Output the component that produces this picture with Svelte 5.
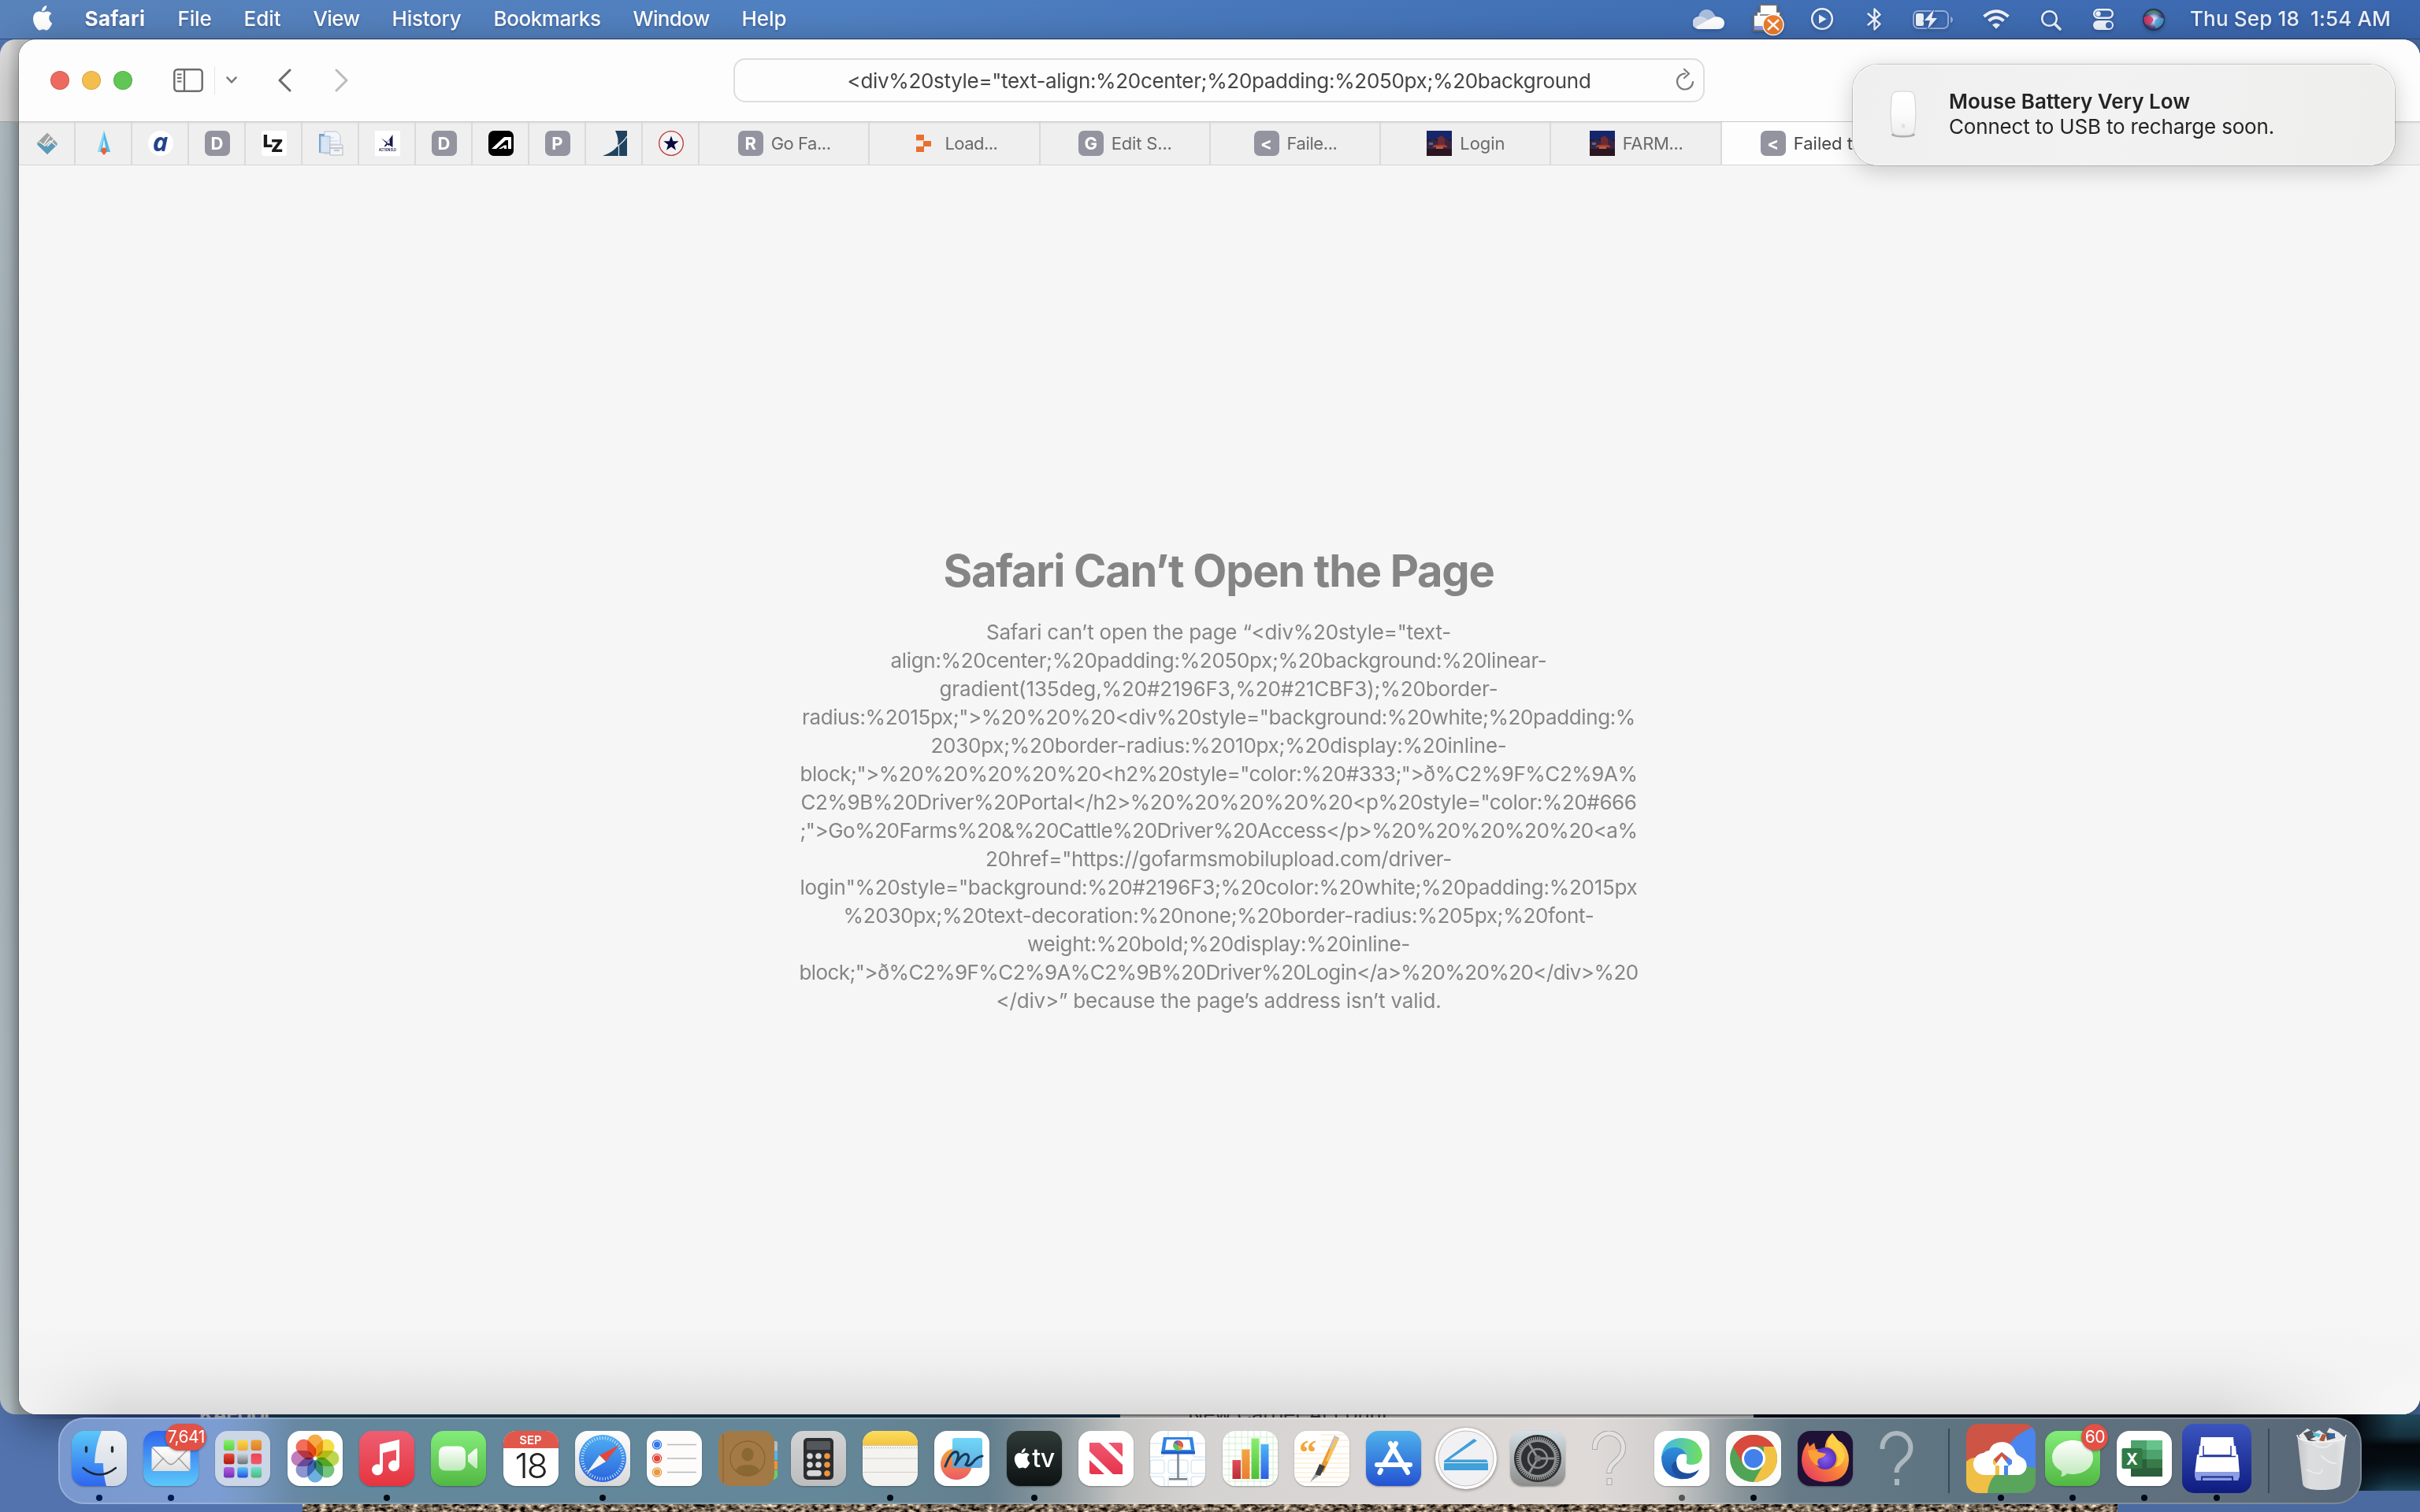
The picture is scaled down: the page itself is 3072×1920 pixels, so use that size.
<script>
  const menus = [
    ['File', 43], ['Edit', 47], ['View', 59], ['History', 88],
    ['Bookmarks', 136], ['Window', 97], ['Help', 57]
  ];

  const tabs = [
    { kind: 'R', title: 'Go Fa...', w: 76 },
    { kind: 'pixel', title: 'Load...', w: 67 },
    { kind: 'G', title: 'Edit S...', w: 77 },
    { kind: '<', title: 'Faile...', w: 64 },
    { kind: 'photo', title: 'Login', w: 57 },
    { kind: 'photo', title: 'FARM...', w: 77 }
  ];

  const lines = [
    ['Safari can’t open the page “<div%20style="text-', 590],
    ['align:%20center;%20padding:%2050px;%20background:%20linear-', 833],
    ['gradient(135deg,%20#2196F3,%20#21CBF3);%20border-', 709],
    ['radius:%2015px;">%20%20%20<div%20style="background:%20white;%20padding:%', 1058],
    ['2030px;%20border-radius:%2010px;%20display:%20inline-', 731],
    ['block;">%20%20%20%20%20<h2%20style="color:%20#333;">ð%C2%9F%C2%9A%', 1063],
    ['C2%9B%20Driver%20Portal</h2>%20%20%20%20%20<p%20style="color:%20#666', 1061],
    [';">Go%20Farms%20&%20Cattle%20Driver%20Access</p>%20%20%20%20%20<a%', 1063],
    ['20href="https://gofarmsmobilupload.com/driver-', 592],
    ['login"%20style="background:%20#2196F3;%20color:%20white;%20padding:%2015px', 1063],
    ['%2030px;%20text-decoration:%20none;%20border-radius:%205px;%20font-', 953],
    ['weight:%20bold;%20display:%20inline-', 486],
    ['block;">ð%C2%9F%C2%9A%C2%9B%20Driver%20Login</a>%20%20%20</div>%20', 1065],
    ['</div>” because the page’s address isn’t valid.', 565]
  ];

  const petals = ['#f6a02c', '#f4d92b', '#b3d235', '#62bd6a', '#5aa5dc', '#7c86c9', '#b96bb0', '#ee5a45'];
  const pads = [
    ['#8af06a', '#5fd044'], ['#f8d94c', '#f2a733'], ['#f0a33a', '#de7a2c'],
    ['#ef4a3c', '#a91a12'], ['#c9d4dc', '#6c7072'], ['#ee4257', '#ef5b6b'],
    ['#b55fe4', '#6f2fb4'], ['#55c8f8', '#2450e0'], ['#74e0cf', '#4bb77c']
  ];
  const ticks = Array.from({ length: 48 }, (_, i) => i * 7.5);
  const gearTeeth = Array.from({ length: 60 }, (_, i) => i * 6);

  /* Tracks the text so that the label fills the given width. */
  function fit(node, width) {
    const count = [...node.textContent].length;
    const natural = node.getBoundingClientRect().width;
    node.style.letterSpacing = (width - natural) / count + 'px';
  }
</script>

{#snippet favicon(kind)}
  {#if kind === 'photo'}
    <svg class="fav" viewBox="0 0 32 32">
      <rect width="32" height="32" fill="#1c1a38" />
      <rect width="32" height="11" fill="#16266a" />
      <path d="M0 14 8 11l8 3 8-4 8 4v9H0z" fill="#3a2440" />
      <path d="M14 9 19 6l4 4v9h-9z" fill="#6c2b36" />
      <path d="M10 18h14l3 3H7z" fill="#a83e30" />
      <path d="M3 15h5v3H3z" fill="#4c6c9c" />
      <path d="M12 20h9v3h-9z" fill="#c05a3c" />
      <rect y="24" width="32" height="8" fill="#2a1520" />
    </svg>
  {:else if kind === 'pixel'}
    <svg class="fav" viewBox="0 0 32 32">
      <g fill="#e96f2e"><rect x="6" y="5" width="10" height="7" /><rect x="15" y="13" width="10" height="7" /><rect x="6" y="20" width="10" height="7" /></g>
      <path d="M6 12h9v1H6z" fill="#f5c3a5" />
    </svg>
  {:else}
    <span class="fav letter">{kind}</span>
  {/if}
{/snippet}

<div class="desktop">
  <header class="menubar">
    <svg class="apple" viewBox="0 0 26 32" width="26" height="32"><path fill="#fff" d="M18.2 0c.2 2-.6 3.800-1.700 5.200-1.200 1.400-2.800 2.300-4.400 2.200-.2-1.900.7-3.800 1.700-5C15 1.100 16.800.1 18.200 0zM25.200 22.700c-.8 1.800-1.200 2.600-2.200 4.200-1.400 2.200-3.200 4.500-5 4.500-1.700 0-2.100-1.100-4.400-1.100s-2.800 1.100-4.400 1.100c-1.900 0-3.400-2.100-4.800-4.300C.5 21.200.200 14.300 2.700 10.800c1.700-2.500 4.200-3.400 6-3.400 2.100 0 3.400 1.200 5.200 1.200 1.700 0 2.700-1.200 5.200-1.200 1.700 0 3.900.8 5.300 2.900-4.700 2.600-3.900 9.300.8 12.400z" /></svg>
    <nav>
      <strong use:fit={77}>Safari</strong>
      {#each menus as [name, w]}<span use:fit={w}>{name}</span>{/each}
    </nav>
    <div class="status">
      <svg viewBox="2150 0 40 48" width="40" height="48">
        <path d="M2157 22a10.500 10.500 0 0 1 20-5l4 6-16 8z" fill="#a9bedd" />
        <path d="M2158 36a8 8 0 0 1-1-16c5-1 9 2 13 5l6 6-8 5z" fill="#d3dcec" />
        <path d="M2154 33 2174 22c6-4 16-1 16 6 0 5-3 8-8 8h-24q-3 0-4-3z" fill="#fff" />
      </svg>
      <svg class="m36" viewBox="2226 0 40 48" width="40" height="48">
        <path d="M2227 38V18h4v-4h4V5h22v9h4v5h2v19z" fill="#fff" stroke="#6d6f76" stroke-width="2" />
        <path d="M2235 18h22" stroke="#6d6f76" stroke-width="1.500" /><path d="M2228 32h14v5h-14z" fill="#8d9be0" />
        <circle cx="2252" cy="30.500" r="13" fill="#ef7d2d" stroke="#fff" stroke-width="1.500" />
        <path d="m2245 24 14 13m0-13-14 13" stroke="#fff" stroke-width="2.500" />
      </svg>
      <svg class="m34" viewBox="2300 0 28 48" width="28" height="48"><circle cx="2314" cy="23" r="12.800" fill="none" stroke="#eef2f9" stroke-width="2.500" /><path d="M2310 17.500v11.500l9.500-5.700z" fill="#eef2f9" /></svg>
      <svg class="m43" viewBox="2370 0 18 48" width="18" height="48"><path d="m2371.500 16.500 15 13-7 7v-26l7 7-15 13" fill="none" stroke="#eef2f9" stroke-width="2.400" stroke-linejoin="round" stroke-linecap="round" /></svg>
      <svg class="m39" viewBox="2427 0 53 48" width="53" height="48">
        <rect x="2429" y="13" width="44" height="22" rx="6" fill="none" stroke="#94aed7" stroke-width="2" /><path d="M2476 20v8q3-1 3-4t-3-4z" fill="#94aed7" />
        <rect x="2432" y="16" width="10" height="16" rx="2.500" fill="#eef2f9" />
        <path d="M2455 11 2443 25h7l-3 11 12-14h-7z" fill="#eef2f9" stroke="#3e6aaf" stroke-width="2.500" paint-order="stroke" />
      </svg>
      <svg class="m37" viewBox="2517 0 34 48" width="34" height="48"><g fill="none" stroke="#eef2f9" stroke-width="4"><path d="M2518.500 20q15.500-13.500 31 0" /><path d="M2524.500 25.500q9.500-8.500 19 0" /></g><path d="M2529 30.500q5-4 10 0l-5 5.300z" fill="#eef2f9" /></svg>
      <svg class="m40" viewBox="2591 0 26 48" width="26" height="48"><circle cx="2601.500" cy="22.500" r="9.300" fill="none" stroke="#eef2f9" stroke-width="2.500" /><path d="m2608.500 29.500 6.500 6.500" stroke="#eef2f9" stroke-width="3.500" stroke-linecap="round" /></svg>
      <svg class="m40" viewBox="2657 0 26 48" width="26" height="48"><rect x="2658.200" y="11.200" width="23.600" height="10.600" rx="5.300" fill="none" stroke="#eef2f9" stroke-width="2.400" /><circle cx="2663.500" cy="16.500" r="3.200" fill="#eef2f9" /><rect x="2657" y="25" width="26" height="12" rx="6" fill="#eef2f9" /><circle cx="2677" cy="31" r="4" fill="#3c68ae" /></svg>
      <svg class="m37" viewBox="2720 0 28 48" width="28" height="48">
        <defs><radialGradient id="siri"><stop offset="0" stop-color="#fff" /><stop offset=".35" stop-color="#a9b9e8" /><stop offset=".7" stop-color="#4d4a86" /><stop offset="1" stop-color="#26304c" /></radialGradient></defs>
        <circle cx="2734" cy="24" r="14" fill="url(#siri)" /><path d="M2723 18q10-12 21 0-11-4-21 0z" fill="#3da06b" opacity=".75" /><path d="M2721.500 21q8-5 12.500 3-5 10-11 5-2-4-1.500-8z" fill="#d8365f" opacity=".85" /><path d="M2735 25q8-6 12-2-1 10-11 12z" fill="#47a9d8" opacity=".8" />
      </svg>
      <span class="clock" use:fit={255}>Thu Sep 18&nbsp; 1:54 AM</span>
    </div>
  </header>

  <main class="stage">
    <div class="backwin"><div class="backtop"></div></div>
    <section class="window">
      <div class="toolbar">
        <div class="lights"><i class="red"></i><i class="amber"></i><i class="green"></i></div>
        <svg class="side" viewBox="0 0 38 30" width="38" height="30"><rect x="1.300" y="1.300" width="35.400" height="27.400" rx="4" fill="none" stroke="#6e6e6e" stroke-width="2.500" /><path d="M14 1v28" stroke="#6e6e6e" stroke-width="2.300" /><path d="M5 7.500h5.500m-5.500 4.500h5.500m-5.500 4.500h5.500" stroke="#6e6e6e" stroke-width="1.800" /></svg>
        <i class="rule"></i>
        <svg class="chev" viewBox="0 0 14 10" width="14" height="10"><path d="m1.500 1.500 5.500 6 5.500-6" fill="none" stroke="#757577" stroke-width="2.500" stroke-linecap="round" stroke-linejoin="round" /></svg>
        <svg class="back" viewBox="0 0 17 30" width="17" height="30"><path d="M15 2 2 15l13 13" fill="none" stroke="#6b6b6b" stroke-width="3" stroke-linecap="round" stroke-linejoin="round" /></svg>
        <svg class="fwd" viewBox="0 0 17 30" width="17" height="30"><path d="m2 2 13 13L2 28" fill="none" stroke="#bcbcbc" stroke-width="3" stroke-linecap="round" stroke-linejoin="round" /></svg>
        <div class="address">
          <span use:fit={944}>&lt;div%20style="text-align:%20center;%20padding:%2050px;%20background</span>
          <svg viewBox="0 0 24 30" width="24" height="30"><path d="M12 7.500A10 10 0 1 0 22 18" fill="none" stroke="#7a7a7a" stroke-width="2.200" stroke-linecap="round" /><path d="m11 2 6 5.500-6 5.500" fill="none" stroke="#7a7a7a" stroke-width="2.200" stroke-linecap="round" stroke-linejoin="round" /></svg>
        </div>
      </div>

      <div class="tabbar">
        <div class="pin"><svg class="fav" viewBox="0 0 32 32"><path d="M16 2.500 29 16 16 30 2.500 16z" fill="#a1a3a2" /><path d="m3 17.500 6-3 7 5 7-5 6 3L16 30z" fill="#5b9ab8" /><path d="m16 20 8-9m-13 7 8-11M6 14l7 5 7-6 7 6" stroke="#efefef" stroke-width="1.500" fill="none" /></svg></div>
        <div class="pin"><svg class="fav" viewBox="0 0 32 32"><path d="M16 0 24 27h-5L16 10l-3 17H8z" fill="#4fb8e8" /><path d="M16 0 8 27h3L16 7z" fill="#8bdcf5" /><path d="M12.500 25a3.500 3.500 0 0 1 7 0q0 3-3.500 6-3.500-3-3.500-6z" fill="#e5633a" /></svg></div>
        <div class="pin"><span class="fav scripta">a</span></div>
        <div class="pin">{@render favicon('D')}</div>
        <div class="pin"><span class="fav lz"><b>L</b><b>Z</b></span></div>
        <div class="pin"><svg class="fav" viewBox="0 0 32 32"><path d="M1 4h11v24H1z" fill="#6fa4d2" /><path d="M8 1h15l5 5v23H8z" fill="#f2f5fa" stroke="#b9c3d3" /><path d="M3 7h12v21H3z" fill="#d7e5f4" stroke="#9db6d0" /><path d="M11 13h14M11 17h14M11 9h9" stroke="#cbd3df" /><path d="M15 18h16v13H15z" fill="#f4f4f6" stroke="#b4bac6" /><path d="M15 22h16M20 25h7" stroke="#c0c5cf" stroke-width="2" /></svg></div>
        <div class="pin"><svg class="fav" viewBox="0 0 32 32"><rect width="32" height="32" fill="#fff" /><path d="M22.500 5v16l-4-2.500V15l-5 5h-2zM8 9.500l11 7.500-1.500 2z" fill="#17194d" /><path d="m18.500 11-3.500 5h3.500z" fill="#fff" /><text x="16" y="26" text-anchor="middle" textLength="22" lengthAdjust="spacingAndGlyphs" font-size="4.500" font-weight="700" fill="#17194d">ACTION ELD</text></svg></div>
        <div class="pin">{@render favicon('D')}</div>
        <div class="pin"><svg class="fav" viewBox="0 0 32 32"><rect width="32" height="32" rx="7" fill="#000" /><path d="M4 23 20 8h9v15h-4V12h-3L10 23z" fill="#fff" /><path d="m13 23 7-4.500h3V23h-3v-2l-4 2z" fill="#fff" /></svg></div>
        <div class="pin">{@render favicon('P')}</div>
        <div class="pin"><svg class="fav" viewBox="0 0 32 32"><path d="M17 0h15v32H1Q15 27 20 19q2-9-3-19z" fill="#21425f" /><path d="M13 23Q26 17 32 7M21.500 18v14" fill="none" stroke="#e6ebf0" stroke-width="1.200" /></svg></div>
        <div class="pin"><svg class="fav" viewBox="0 0 32 32"><circle cx="16" cy="16" r="15.300" fill="#f3f3f5" stroke="#c4342c" stroke-width="1.300" /><path d="m16 6.500 2.400 6.800h7.300l-5.800 4.400 2.100 7-6-4.200-6 4.200 2.100-7-5.800-4.400h7.300z" fill="#070a3a" /></svg></div>
        {#each tabs as t}
          <div class="tab">{@render favicon(t.kind)}<span use:fit={t.w}>{t.title}</span></div>
        {/each}
        <div class="tab active">{@render favicon('<')}<span>Failed t...</span></div>
        <div class="rest"></div>
      </div>

      <article class="page">
        <h1 use:fit={699}>Safari Can’t Open the Page</h1>
        {#each lines as [text, w]}<p><span use:fit={w}>{text}</span></p>{/each}
      </article>
    </section>

    <div class="behind">
      <div class="strip">
        <span class="kae">KAEUUI</span>
        <div class="card"><span>New Carrier Account</span></div>
        <div class="night"></div>
      </div>
    </div>
    <div class="nightside"></div>
    <svg class="gravel" width="2304" height="10">
      <filter id="rock" x="0" y="0" width="100%" height="100%" color-interpolation-filters="sRGB"><feTurbulence type="fractalNoise" baseFrequency=".13 .22" numOctaves="3" seed="4" /><feColorMatrix values="1.700 0 0 0 -.38  1.600 0 0 0 -.39  1.450 0 0 0 -.38  0 0 0 0 1" /></filter>
      <rect width="2304" height="10" filter="url(#rock)" />
    </svg>
  </main>

  <aside class="notice">
    <svg viewBox="0 0 36 62" width="36" height="62"><defs><linearGradient id="mouse" x1="0" y1="0" x2="0" y2="1"><stop offset="0" stop-color="#fff" /><stop offset=".5" stop-color="#fcfcfc" /><stop offset="1" stop-color="#eee" /></linearGradient></defs><ellipse cx="18" cy="57" rx="15" ry="3.500" fill="#aaa" /><path d="M3 12Q3 2 12 2h12q9 0 9 10 2 16 0 36 0 10-10 10H13Q3 58 3 48 1 28 3 12z" fill="url(#mouse)" stroke="#cfd0d0" stroke-width="1" /><ellipse cx="18" cy="46" rx="2.300" ry="3" fill="#e0e1e1" /></svg>
    <div><strong use:fit={306}>Mouse Battery Very Low</strong><span use:fit={413}>Connect to USB to recharge soon.</span></div>
  </aside>

  <footer class="dock">
    <div class="cell"><div class="slot">
      <svg class="app" viewBox="0 0 70 70"><defs><linearGradient id="fb" x2="0" y2="1"><stop stop-color="#5ac8f8" /><stop offset="1" stop-color="#2f66ee" /></linearGradient><linearGradient id="fw" x2="0" y2="1"><stop stop-color="#f1f2f4" /><stop offset="1" stop-color="#d0d8e3" /></linearGradient></defs><rect width="70" height="70" fill="url(#fb)" /><path d="M38 0q-8 18-9 41h11q0 15 4 29h26V0z" fill="url(#fw)" /><path d="M18.500 21v5M51.500 21v5" stroke="#222b33" stroke-width="3.400" stroke-linecap="round" /><path d="M14.500 47q20.500 17 41.500 0" fill="none" stroke="#1c2530" stroke-width="2.400" stroke-linecap="round" /></svg></div><i class="dot navy"></i></div>
    <div class="cell"><div class="slot">
      <svg class="app" viewBox="0 0 70 70"><defs><linearGradient id="ml" x2="0" y2="1"><stop stop-color="#3067ee" /><stop offset="1" stop-color="#5bc8fa" /></linearGradient><linearGradient id="env" x2="0" y2="1"><stop stop-color="#fff" /><stop offset="1" stop-color="#e0e0e0" /></linearGradient></defs><rect width="70" height="70" fill="url(#ml)" /><rect x="10.500" y="20" width="49" height="31" rx="3" fill="url(#env)" /><path d="m11 50 15-16m33 16L44 34M11 21l19 19q5 5 10 0l19-19" fill="none" stroke="#9c9c9c" stroke-width="1.300" /></svg></div><i class="dot navy"></i><b class="badge wide">7,641</b></div>
    <div class="cell"><div class="slot">
      <svg class="app" viewBox="0 0 70 70"><rect width="70" height="70" fill="#cbd6e6" />{#each pads as [a, b], i}<linearGradient id="pad{i}" x2="0" y2="1"><stop stop-color={a} /><stop offset="1" stop-color={b} /></linearGradient><rect x={11 + (i % 3) * 17.3} y={11.500 + Math.floor(i / 3) * 17.300} width="13.500" height="13.500" rx="3" fill="url(#pad{i})" />{/each}</svg></div></div>
    <div class="cell"><div class="slot">
      <svg class="app" viewBox="0 0 70 70"><rect width="70" height="70" fill="#fff" /><g class="petals">{#each petals as c, i}<rect x="25" y="4.500" width="20" height="28.500" rx="10" fill={c} opacity=".88" transform="rotate({i * 45} 35 35)" />{/each}</g></svg></div></div>
    <div class="cell"><div class="slot">
      <svg class="app" viewBox="0 0 70 70"><defs><linearGradient id="mu" x2="0" y2="1"><stop stop-color="#ee5f72" /><stop offset="1" stop-color="#e6343f" /></linearGradient></defs><rect width="70" height="70" fill="url(#mu)" /><path d="m26 17 25-6v34a7 7 0 1 1-4-7V24l-17 4v22a7 7 0 1 1-4-7z" fill="#fff" /></svg></div><i class="dot"></i></div>
    <div class="cell"><div class="slot">
      <svg class="app" viewBox="0 0 70 70"><defs><linearGradient id="ft" x2="0" y2="1"><stop stop-color="#84ec79" /><stop offset="1" stop-color="#51b943" /></linearGradient><linearGradient id="cam" x2="0" y2="1"><stop stop-color="#fff" /><stop offset="1" stop-color="#bfe8b9" /></linearGradient></defs><rect width="70" height="70" fill="url(#ft)" /><rect x="10" y="19.500" width="34" height="31" rx="8" fill="url(#cam)" /><path d="m47 31 9-8q3-2 3 1v22q0 3-3 1l-9-8z" fill="url(#cam)" /></svg></div></div>
    <div class="cell"><div class="slot"><div class="app calendar"><b>SEP</b><span>18</span></div></div></div>
    <div class="cell"><div class="slot">
      <svg class="app" viewBox="0 0 70 70"><defs><linearGradient id="sw" x2="0" y2="1"><stop stop-color="#fff" /><stop offset="1" stop-color="#d8d8d8" /></linearGradient><linearGradient id="sf" x2="0" y2="1"><stop stop-color="#4fb0f2" /><stop offset="1" stop-color="#2a63dd" /></linearGradient></defs><rect width="70" height="70" fill="url(#sw)" /><circle cx="35" cy="35" r="30" fill="url(#sf)" />{#each ticks as a}<path d="M35 7v4" stroke="#d6e8fb" stroke-width="1" transform="rotate({a} 35 35)" />{/each}<path d="m56 18-25 13 8 8z" fill="#e5463c" /><path d="m15 53 16-22 8 8z" fill="#f4f4f4" /></svg></div><i class="dot"></i></div>
    <div class="cell"><div class="slot">
      <svg class="app" viewBox="0 0 70 70"><rect width="70" height="70" fill="#fdfcfb" />{#each ['#2f79ec', '#e2473b', '#ea973c'] as c, i}<circle cx="13" cy={17.500 + i * 17.500} r="5.600" fill="none" stroke={c} stroke-width="1.200" /><circle cx="13" cy={17.500 + i * 17.500} r="4" fill={c} /><path d="M26 {17.500 + i * 17.500}h37" stroke="#b9b9be" stroke-width="1.300" />{/each}</svg></div></div>
    <div class="cell"><div class="slot">
      <svg class="contacts" viewBox="0 0 75 70" width="75" height="70"><path d="M66 13h7q2 0 2 3v10h-9z" fill="#b7bcb9" /><path d="M66 25h8q1 0 1 2v10h-9z" fill="#5ab3e8" /><path d="M66 38h8q1 0 1 2v9h-9z" fill="#ee9433" /><path d="M66 50h9v7q0 4-9 6z" fill="#6ccf63" /><rect x="0" width="71" height="70" rx="15" fill="#a37a45" /><path d="M6 4v62" stroke="#8b6536" stroke-width="1.300" /><circle cx="37" cy="35" r="22" fill="none" stroke="#87642f" stroke-width="1.300" /><ellipse cx="37" cy="30" rx="7.500" ry="8.500" fill="#87642f" opacity=".85" /><path d="M22 50q3-7 15-7t15 7q-6 7-15 7t-15-7z" fill="#87642f" opacity=".85" /></svg></div></div>
    <div class="cell"><div class="slot">
      <svg class="app" viewBox="0 0 70 70"><defs><linearGradient id="cc" x2="0" y2="1"><stop stop-color="#d3d3d3" /><stop offset="1" stop-color="#bdbdbd" /></linearGradient></defs><rect width="70" height="70" fill="url(#cc)" /><rect x="16" y="9" width="38" height="53" rx="5" fill="#2b2d30" /><rect x="20" y="13" width="30" height="11" rx="1.500" fill="#55585b" /><g fill="#d6d7d6"><circle cx="24" cy="32" r="3.800" /><circle cx="35" cy="32" r="3.800" /><circle cx="24" cy="43" r="3.800" /><circle cx="35" cy="43" r="3.800" /><rect x="20.200" y="50" width="18.600" height="7.600" rx="3.800" /></g><g fill="#f0953a"><circle cx="46" cy="32" r="3.800" /><circle cx="46" cy="43" r="3.800" /><circle cx="46" cy="54" r="3.800" /></g></svg></div></div>
    <div class="cell"><div class="slot">
      <svg class="app" viewBox="0 0 70 70"><defs><linearGradient id="ny" x2="0" y2="1"><stop stop-color="#fbdc62" /><stop offset="1" stop-color="#f4c53b" /></linearGradient></defs><rect width="70" height="70" fill="#f4f3f0" /><rect width="70" height="18" fill="url(#ny)" /><path d="M2 21.500h68" stroke="#b6b4b0" stroke-width="1.500" stroke-dasharray="1 2" /><path d="M0 18.500h70" stroke="#cfc9b5" /><path d="M0 35h70M0 52.500h70" stroke="#d3d1ce" stroke-width="1.200" /></svg></div><i class="dot"></i></div>
    <div class="cell"><div class="slot">
      <svg class="app" viewBox="0 0 70 70"><defs><linearGradient id="fo" x2="0" y2="1"><stop stop-color="#f4a73a" /><stop offset="1" stop-color="#ec5a66" /></linearGradient><linearGradient id="fc" x2="0" y2="1"><stop stop-color="#64d5f8" /><stop offset="1" stop-color="#58a5de" /></linearGradient></defs><rect width="70" height="70" fill="#fff" /><circle cx="28" cy="42" r="20" fill="url(#fo)" /><rect x="23" y="9" width="38" height="38" rx="3" fill="url(#fc)" opacity=".93" /><path d="M14 45Q22 24 29 27q4 3-3 17 10-17 16-14 4 3-2 13 4 3 9-3 5-7 12-8" fill="none" stroke="#123a5c" stroke-width="3" stroke-linecap="round" /></svg></div></div>
    <div class="cell"><div class="slot">
      <div class="app tv"><svg viewBox="0 0 26 32" width="21" height="26"><path fill="#fff" d="M18.200 0c.2 2-.6 3.800-1.700 5.200-1.200 1.400-2.800 2.300-4.400 2.200-.2-1.900.7-3.800 1.700-5C15 1.100 16.800.1 18.200 0zM25.200 22.700c-.8 1.800-1.200 2.600-2.200 4.200-1.400 2.200-3.200 4.500-5 4.500-1.700 0-2.100-1.100-4.400-1.100s-2.800 1.100-4.400 1.100c-1.900 0-3.400-2.100-4.800-4.300C.5 21.200.200 14.300 2.700 10.800c1.700-2.500 4.200-3.400 6-3.400 2.100 0 3.400 1.200 5.200 1.200 1.700 0 2.700-1.200 5.200-1.200 1.700 0 3.900.8 5.300 2.900-4.700 2.600-3.900 9.300.8 12.400z" /></svg><span>tv</span></div></div><i class="dot"></i></div>
    <div class="cell"><div class="slot">
      <svg class="app" viewBox="0 0 70 70"><defs><linearGradient id="nw" x2="0" y2="1"><stop stop-color="#ef5871" /><stop offset="1" stop-color="#e7344c" /></linearGradient></defs><rect width="70" height="70" fill="#fff" /><path d="M14 15h13l29 28v12H44L14 26z" fill="url(#nw)" /><path d="M38 15h15q3 0 3 3v15zM14 37l19 18H17q-3 0-3-3z" fill="url(#nw)" /></svg></div></div>
    <div class="cell"><div class="slot">
      <svg class="app" viewBox="0 0 70 70"><rect width="70" height="70" fill="#fff" /><g fill="none" stroke="#c8def3" stroke-width="1"><rect x="-6" y="16" width="24" height="17" rx="3" /><rect x="0" y="37" width="18" height="17" rx="3" /><rect x="23" y="37" width="25" height="17" rx="3" /><rect x="52" y="37" width="25" height="17" rx="3" /><rect x="54" y="16" width="25" height="17" rx="3" /><rect x="-6" y="58" width="24" height="17" rx="3" /><rect x="23" y="58" width="25" height="17" rx="3" /><rect x="52" y="58" width="25" height="17" rx="3" /><path d="M23 0v8m25-8v8" /></g><path d="M34 28h3v33h-3z" fill="#8a96a3" /><path d="M24 60h23v2.500H24z" fill="#777f87" /><path d="M17 8h37l3 20H14z" fill="#2f84e2" /><path d="M14 26h43v3.500H14z" fill="#1e5ec4" /><path d="M21 11h29l2 13H19z" fill="#fff" /><circle cx="35.500" cy="18.500" r="6.500" fill="#5cc45a" /><path d="M35.500 18.500V12a6.500 6.500 0 0 1 6 9z" fill="#e15a52" /><path d="M35.500 18.500 30 15a6.500 6.500 0 0 1 5.500-3z" fill="#7b58c8" /><path d="m35.500 18.500 6 2.500a6.500 6.500 0 0 1-4 4z" fill="#f0a43a" /></svg></div></div>
    <div class="cell"><div class="slot">
      <svg class="app" viewBox="0 0 70 70"><rect width="70" height="70" fill="#fff" /><path d="M0 8h70M0 16h70M0 24h70M0 32h70M0 40h70M0 48h70M0 56h70M0 64h70M8 0v70M16 0v70M24 0v70M32 0v70M40 0v70M48 0v70M56 0v70M64 0v70" stroke="#d4efd0" stroke-width="1" /><defs><linearGradient id="b1" x2="0" y2="1"><stop stop-color="#e0505a" /><stop offset="1" stop-color="#bb2a38" /></linearGradient><linearGradient id="b2" x2="0" y2="1"><stop stop-color="#f3a544" /><stop offset="1" stop-color="#ea7c30" /></linearGradient><linearGradient id="b3" x2="0" y2="1"><stop stop-color="#8aee6f" /><stop offset="1" stop-color="#4fbf37" /></linearGradient><linearGradient id="b4" x2="0" y2="1"><stop stop-color="#4fb5f8" /><stop offset="1" stop-color="#2d5ee2" /></linearGradient></defs><rect x="12.500" y="37" width="10.500" height="24" fill="url(#b1)" /><rect x="24.500" y="23.500" width="10" height="37.500" fill="url(#b2)" /><rect x="36.500" y="9.500" width="10" height="51.500" fill="url(#b3)" /><rect x="48.500" y="17" width="10" height="44" fill="url(#b4)" /></svg></div></div>
    <div class="cell"><div class="slot">
      <svg class="app" viewBox="0 0 70 70"><rect width="70" height="70" fill="#fff" /><path d="M34 5h36M34 12h36M0 29h70M0 35h70M0 41h70M0 47h70M0 53h70M0 59h70M0 65h70M34 20h36" stroke="#fbe3c2" stroke-width="1.200" /><text x="6" y="42" font-size="45" font-weight="700" fill="#f1a53a" class="quote">“</text><path d="m51 6 6 3-20 44-6-3z" fill="#eb9a2e" /><path d="m51 6 6 3-7 16-6-3z" fill="#b9c3d0" /><path d="m52 9 4 2-13 28-3-1z" fill="#f6c25c" /><path d="m32 42 7 3-6 12-7-1z" fill="#3d4145" /><path d="m26 55 5 2-11 8z" fill="#9aa2ac" /></svg></div></div>
    <div class="cell"><div class="slot">
      <svg class="app" viewBox="0 0 70 70"><defs><linearGradient id="as" x2="0" y2="1"><stop stop-color="#4fb2ec" /><stop offset="1" stop-color="#2552d2" /></linearGradient></defs><rect width="70" height="70" fill="url(#as)" /><g stroke="#fff" stroke-width="6" stroke-linecap="round"><path d="M14 43h42M38 16 24 40M31 16l22 37M19 50l-1.500 3" /></g></svg></div></div>
    <div class="cell"><div class="slot">
      <svg class="scan" viewBox="0 0 78 78" width="78" height="78"><circle cx="39" cy="39" r="39" fill="#fff" /><circle cx="39" cy="39" r="35" fill="#f1f1f3" stroke="#bdbdbd" stroke-width="1" /><path d="m11 42 38-28 4 2.500-35 24h47l2 3.500H11z" fill="#419fd9" /><path d="M11 45h56v9H11z" fill="#419fd9" /></svg></div></div>
    <div class="cell"><div class="slot">
      <svg class="app" viewBox="0 0 70 70"><defs><linearGradient id="st" x2="0" y2="1"><stop stop-color="#d3dfe6" /><stop offset="1" stop-color="#8d8d8b" /></linearGradient></defs><rect width="70" height="70" fill="url(#st)" /><circle cx="35" cy="35" r="30" fill="#2e3032" />{#each gearTeeth as a}<path d="M35 7.500v4" stroke="#9b9d9e" stroke-width="1.500" transform="rotate({a} 35 35)" />{/each}<g fill="none" stroke="#8d9092"><circle cx="35" cy="35" r="22.500" stroke-width="3" /><circle cx="35" cy="35" r="12" stroke-width="2.500" /><path d="M35 35h22M35 35 24 16M35 35 24 54" stroke-width="2.800" /></g><circle cx="35" cy="35" r="4" fill="#77797b" /></svg></div></div>
    <div class="cell"><div class="slot">
      <svg class="ask" viewBox="0 0 44 70" width="44" height="70"><path d="M3.500 24V21a18 18 0 0 1 36 0c0 17-18 18-18 33M22 60v9" fill="none" stroke="#999" stroke-opacity=".75" stroke-width="7" /><path d="M3.500 23V21a18 18 0 0 1 36 0c0 17-18 18-18 32M22 61v7" fill="none" stroke="#e4e2e1" stroke-width="5" /></svg></div></div>
    <div class="cell"><div class="slot">
      <svg class="app" viewBox="0 0 70 70"><defs><linearGradient id="eg"><stop stop-color="#3fb5f0" /><stop offset="1" stop-color="#72e05c" /></linearGradient><linearGradient id="eb" x2="0" y2="1"><stop stop-color="#2f8fdc" /><stop offset="1" stop-color="#1d58b4" /></linearGradient></defs><rect width="70" height="70" fill="#fff" /><path d="M9 32Q13 9 36 9q22 1 25 22-1 12-14 12-8 0-6-5 2-14-12-16-13-1-20 10z" fill="url(#eg)" /><path d="M9 33q5-13 19-12 9 1 13 9-12-3-13 8 0 17 20 20-7 4-16 3Q9 57 9 33z" fill="url(#eb)" /><path d="M28 38q-1 15 15 16 6 0 14-5-6 12-19 12-15-3-16-15 0-5 6-8z" fill="#1e4f9c" /></svg></div><i class="dot gray"></i></div>
    <div class="cell"><div class="slot">
      <svg class="app" viewBox="0 0 70 70"><rect width="70" height="70" fill="#fbfbfb" /><circle cx="35" cy="35" r="30" fill="#4fa555" /><path d="M9 20a30 30 0 0 1 52 0H35L22 43z" fill="#d84a3c" /><path d="M61 20a30 30 0 0 1-26 45l13-23V20z" fill="#f3c244" /><circle cx="35" cy="35" r="15" fill="#fff" /><circle cx="35" cy="35" r="12" fill="#4380ea" /></svg></div><i class="dot"></i></div>
    <div class="cell"><div class="slot">
      <svg class="app" viewBox="0 0 70 70"><defs><linearGradient id="fx" x1="1" y1="0" x2="0" y2="1"><stop stop-color="#fde24c" /><stop offset=".5" stop-color="#f98535" /><stop offset="1" stop-color="#e22a6b" /></linearGradient><radialGradient id="fp"><stop stop-color="#8a5cf5" /><stop offset="1" stop-color="#5532b8" /></radialGradient></defs><rect width="70" height="70" fill="#1f1236" /><path d="M44 3q4 8 12 12 9 9 9 22-1 27-30 28Q7 64 5 38q0-13 8-24l2 6 6-5 2 8 12 2q-2-13 9-22z" fill="url(#fx)" /><circle cx="35" cy="35" r="14" fill="url(#fp)" /><path d="M13 25q8-3 14 2l9 2q-2 5-9 6-4 5 1 10-12-3-15-20z" fill="#fca038" /><path d="M38 20q12 3 13 17-1 6-4 9 12-2 13-16-6-16-16-27-8 9-6 17z" fill="#fdd045" /></svg></div></div>
    <div class="cell"><div class="slot">
      <svg class="ask" viewBox="0 0 44 70" width="44" height="70"><path d="M3.500 23V21a18 18 0 0 1 36 0c0 17-18 18-18 32M22 61v8" fill="none" stroke="#adb7bf" stroke-width="6" /></svg></div></div>
    <div class="split first"></div>
    <div class="cell"><div class="slot">
      <svg class="app big" viewBox="0 0 88 88"><rect width="88" height="88" fill="#cc5546" /><path d="M88 0v60H55L50 35Q60 12 88 3z" fill="#4a86ee" /><path d="M0 48q6-6 16-5l32 12 7 13-24 20H0z" fill="#f0bf45" /><path d="M88 56v32H27q2-22 20-30 20-8 41-2z" fill="#59a55b" /><path d="M24 65a14 14 0 0 1-2-28q3-3 7-3 4-11 17-11 13 1 17 14 1 2 6 5a12 12 0 0 1-2 23z" fill="#fff" /><path d="M34 46 45 36l2 6-5 8v15h-5V54l-3-3z" fill="#f0bf45" /><path d="m45 36 13 10v5l-5 3v11h-5V50z" fill="#4a86ee" /><path d="m35 45 10-9 9 8-9 5-6 2z" fill="#cc5546" /><path d="m45 41 9 12h-6v12h-6V53h-6z" fill="#fff" /></svg></div><i class="dot"></i></div>
    <div class="cell"><div class="slot">
      <svg class="app" viewBox="0 0 70 70"><rect width="70" height="70" fill="url(#ft)" /><path d="M35 12c15 0 26 10 26 22S50 55 35 55q-4 0-7-1-3 4-8 4 2-3 1-7Q9 45 9 34c0-12 11-22 26-22z" fill="url(#cam)" /></svg></div><i class="dot"></i><b class="badge round">60</b></div>
    <div class="cell"><div class="slot">
      <svg class="app" viewBox="0 0 70 70"><rect width="70" height="70" fill="#fff" /><path d="M18 12h20v46H18z" fill="#4ea26d" /><path d="M38 12h20v12H38z" fill="#66c48a" /><path d="M38 24h20v12H38z" fill="#4ea26d" /><path d="M18 24h20v12H18z" fill="#3c8a58" /><path d="M38 36h20v11H38z" fill="#387b48" /><path d="M18 36h20v11H18zM18 47h40v11H18z" fill="#2c5f3c" /><rect x="6.500" y="22" width="26" height="26" rx="2" fill="#307a45" /><text x="19.500" y="42.500" font-size="20" font-weight="700" fill="#fff" text-anchor="middle">X</text></svg></div><i class="dot"></i></div>
    <div class="cell"><div class="slot">
      <svg class="app big" viewBox="0 0 88 88"><defs><linearGradient id="pr" x2="0" y2="1"><stop stop-color="#3b55bf" /><stop offset="1" stop-color="#0f1c80" /></linearGradient></defs><rect width="88" height="88" fill="url(#pr)" /><path d="M24 17h41l2 24H22z" fill="#fff" /><path d="M22 28h4v13h38V28h4l1 11 2 0 2 25H16l3-25 2 0z" fill="#fff" /><path d="M27 28v12h35V28M22 41.500h46" fill="none" stroke="#24389f" stroke-width="1.500" /><path d="M16 61h57v6l-2 5H18l-2-5z" fill="#8c9de2" /><path d="M25 72v-4.500h39V72" fill="none" stroke="#17288c" stroke-width="1.800" /></svg></div><i class="dot"></i></div>
    <div class="split second"></div>
    <div class="cell"><div class="slot">
      <svg viewBox="0 0 64 82" width="64" height="82"><defs><linearGradient id="tr"><stop stop-color="#c9c9c9" /><stop offset=".25" stop-color="#e2e2e2" /><stop offset=".8" stop-color="#dedede" /><stop offset="1" stop-color="#f1f1f1" /></linearGradient></defs><path d="M3 12 14 3l9 5 6-3 8 6 5-9 12 6 7 6-8 9H10z" fill="#e9e9e9" /><path d="m9 9 10-4 6 8-10 5zM37 8l8 1 5 6-11 3z" fill="#50565c" /><path d="m22 8 9 2-2 4-8-2z" fill="#4fc0d2" /><path d="m33 10 5 1-3 9-6-2z" fill="#a95a3c" /><path d="M42 9h7v6h-8z" fill="#3a66a4" /><path d="m14 16 12 3-9 3z" fill="#3a3a3c" /><path d="M1 11q0 9 31 9t31-9l-7 62q-1 8-24 8T8 73z" fill="url(#tr)" opacity=".96" /><path d="M1 11q0 9 31 9t31-9" fill="none" stroke="#f5f5f5" stroke-width="1.500" /><path d="M20 22q15 10 25 0M13 55q18 10 20 0m-2-18q12 12 20 10" fill="none" stroke="#ebebeb" stroke-width="2" /></svg></div></div>
  </footer>
</div>

<style>
  :global(body) { margin: 0; overflow: hidden; }
  .desktop {
    width: 3072px; height: 1920px; position: relative; overflow: hidden;
    display: flex; flex-direction: column;
    font-family: Inter, "Liberation Sans", sans-serif; font-size: 26px; color: #454545;
    background: linear-gradient(90deg, #5273ae, #4d70ab 60%, #4a699f);
  }
  svg { display: block; flex: none; }
  strong, span, h1 { white-space: pre; }
  nav span, nav strong, .clock, .notice span, .notice strong { display: inline-block; flex: none; }

  .menubar {
    height: 50px; flex: none; display: flex; align-items: center; padding: 0 37px 0 41px; box-sizing: border-box;
    background: linear-gradient(90deg, #5882ba, #4f80c1 35%, #4473b8 62%, #3b67ae);
    border-bottom: 1px solid #2e4c80; color: #fff;
  }
  .apple { margin-top: -3px; }
  nav { display: flex; gap: 41px; margin-left: 40.500px; height: 48px; line-height: 46px; font-weight: 500; text-shadow: 0 2px 3px rgba(0, 0, 50, .25); }
  nav strong { font-weight: 700; }
  .status { display: flex; margin-left: auto; height: 48px; line-height: 46px; filter: drop-shadow(0 2px 2px rgba(0, 0, 50, .22)); }
  .m34 { margin-left: 34px; } .m36 { margin-left: 36px; } .m37 { margin-left: 37px; }
  .m39 { margin-left: 39px; } .m40 { margin-left: 40px; } .m43 { margin-left: 43px; }
  .clock { margin-left: 32px; font-weight: 500; color: #eef2f9; }

  .stage { flex: 1; position: relative; }
  .backwin {
    position: absolute; left: 0; top: 0; width: 60px; height: 1746px; border-radius: 20px; overflow: hidden;
    background: linear-gradient(90deg, rgba(0, 0, 0, 0) 20%, rgba(0, 0, 0, .16) 40%), linear-gradient(#b9c6cc, #adbbc2 30%, #b7c3c9 90%, #bcc8cb);
  }
  .backtop { height: 104px; border-bottom: 1px solid #a5adb0; background: linear-gradient(90deg, #dedede 10px, #c4c4c4 24px); }
  .window {
    position: absolute; left: 24px; top: 0; width: 3048px; height: 1746px; border-radius: 22px; overflow: hidden;
    display: flex; flex-direction: column; background: #f6f6f6; box-shadow: 0 0 0 1px rgba(0, 0, 0, .22), 0 14px 50px rgba(0, 0, 0, .4);
  }
  .toolbar { height: 104px; flex: none; display: flex; align-items: center; background: #fdfdfd; }
  .lights { display: flex; gap: 16px; margin-left: 40px; }
  .lights i { width: 24px; height: 24px; border-radius: 50%; box-shadow: inset 0 0 0 1px rgba(0, 0, 0, .12); }
  .red { background: #ec6a5f; } .amber { background: #f4be4f; } .green { background: #62c655; }
  .side { margin-left: 52px; }
  .rule { width: 1px; height: 36px; margin-left: 14px; background: #e5e5e5; }
  .chev { margin-left: 14px; }
  .back { margin-left: 51.500px; } .fwd { margin-left: 55px; }
  .address {
    width: 1233px; height: 56px; box-sizing: border-box; margin-left: 489px; border: 2px solid #dedede; border-radius: 15px;
    display: flex; align-items: center; justify-content: space-between; padding: 0 11px 0 143px;
  }
  .address svg { margin-top: -2px; }
  .tabbar { height: 54px; flex: none; display: flex; border-top: 1px solid #c9c9c9; border-bottom: 2px solid #d6d6d6; margin-bottom: -1px; background: #efefef; }
  .pin, .tab, .rest { box-sizing: border-box; border-right: 2px solid #dadada; display: flex; align-items: center; justify-content: center; box-shadow: inset 0 3px 3px -2px rgba(0, 0, 0, .09); flex: none; }
  .pin { width: 72px; padding-left: 1px; }
  .tab { width: 216.300px; gap: 10px; padding-left: 1px; font-size: 22px; color: #6a6a6a; }
  .tab span { display: inline-block; }
  .active { background: #fdfdfd; color: #464646; box-shadow: none; justify-content: flex-start; padding-left: 49px; }
  .rest { flex: 1; border: 0; }
  .fav { width: 32px; height: 32px; flex: none; }
  .letter { border-radius: 7px; background: #9494a0; color: #fff; font-weight: 700; font-size: 22px; line-height: 33px; text-align: center; }
  .scripta { border-radius: 50%; background: #fff; color: #24428f; font: italic 700 33px/27px "Open Sans", sans-serif; text-align: center; }
  .lz { background: #fff; border-radius: 3px; color: #1b1b1b; display: flex; justify-content: center; font-size: 22px; line-height: 26px; }
  .lz b { font-weight: 900; margin-left: -2px; } .lz b + b { line-height: 38px; }

  .page {
    flex: 1; display: flex; flex-direction: column; align-items: center; padding: 481px 2px 0 0; color: #858585;
    background:
      radial-gradient(ellipse 130px 150px at 0 100%, rgba(246, 246, 246, .9), rgba(246, 246, 246, 0)),
      radial-gradient(ellipse 260px 170px at 100% 100%, #f6f6f6 20%, rgba(246, 246, 246, 0)),
      linear-gradient(#f6f6f6 1470px, #f0f0f0 1520px, #e4e4e4 1560px, #d9d9d9);
  }
  h1 { margin: 0 0 26px; height: 68px; line-height: 68px; font-size: 56px; font-weight: 700; display: inline-block; }
  p { margin: 0; height: 36px; line-height: 36px; }
  p span { display: inline-block; }

  .behind { position: absolute; left: 0; top: 1746px; width: 3072px; height: 6px; overflow: hidden; }
  .strip { display: flex; width: 3072px; height: 6px; background: linear-gradient(90deg, rgba(20, 34, 66, 0) 30px, #24345f 150px, #2a3a62 335px, #142f40 342px, #0e2536 700px, #0b2135); }
  .kae { width: 1169px; padding-left: 253px; flex: none; height: 6px; line-height: 0; font-weight: 700; color: #8d8d8d; font-size: 26px; letter-spacing: -2px; overflow: hidden; }
  .card { width: 804px; flex: none; height: 6px; background: #918f8f; box-shadow: inset 0 2px 0 #6c6a6a; overflow: hidden; }
  .card span { display: block; padding-left: 86px; line-height: 0; font-size: 26px; color: #2b2b2d; letter-spacing: -.2px; }
  .night { flex: 1; background: #020810; }
  .nightside { position: absolute; left: 2940px; top: 1746px; width: 132px; height: 97px; background: linear-gradient(100deg, #05090f 35%, rgba(5, 12, 20, 0) 70%), linear-gradient(#1f4a5c, #16323f 28%, #04080d 40%, #060d14 65%, #12303f 90%, #20465a); }
  .gravel { position: absolute; left: 384px; bottom: 0; }

  .notice {
    position: absolute; left: 2352px; top: 82px; width: 688px; height: 128px; border-radius: 32px; box-sizing: border-box;
    display: flex; align-items: center; padding: 0 0 2px 46px; background: linear-gradient(100deg, #efefef, #f1f2f1 45%, #eeeeed);
    box-shadow: 0 0 0 1px rgba(0, 0, 0, .18), inset 0 0 0 1px #fafafa, 0 6px 30px rgba(0, 0, 0, .2); color: #242424;
  }
  .notice div { display: flex; flex-direction: column; align-items: flex-start; margin-left: 40px; line-height: 32px; }
  .notice strong { font-weight: 600; }

  .dock {
    position: absolute; left: 74px; top: 1800px; width: 2924px; height: 110px; box-sizing: border-box; border-radius: 33px;
    display: flex; padding-left: 4px; border: 2px solid rgba(255, 255, 255, .22);
    background: linear-gradient(90deg, #7998cd 0, #7c9dd4 200px, #7899c4 240px, #6888a5 300px, #63879c 350px, #648899 980px, #647f8e 1180px, #8e9a9f 1270px, #c5c5c4 1350px, #d5d3d2 1450px, #dfdad8 1950px, #d0cecd 2040px, #8b979c 2130px, #667b87 2200px, #5e7481 2400px, #5f6f7e 2700px, #566676);
    background-clip: border-box; background-origin: border-box;
  }
  .cell { width: 91.320px; flex: none; position: relative; display: flex; flex-direction: column; align-items: center; }
  .slot { height: 100px; display: grid; place-items: center; }
  .app { width: 70px; height: 70px; border-radius: 16px; overflow: hidden; box-shadow: 0 1px 2px rgba(0, 0, 0, .3); }
  .big { width: 88px; height: 88px; border-radius: 15px; box-shadow: none; }
  .dot { width: 8px; height: 8px; border-radius: 50%; background: #020a14; margin-top: -4px; }
  .navy { background: #001a52; } .gray { background: #555; }
  .petals rect { mix-blend-mode: multiply; }
  .contacts { margin-left: 4px; }
  .scan { border-radius: 50%; box-shadow: 0 1px 4px rgba(0, 0, 0, .45); }
  .badge { position: absolute; top: 6px; height: 34px; line-height: 34px; border-radius: 17px; background: #e15145; color: #fff; font-size: 21px; font-weight: 400; text-align: center; letter-spacing: -.5px; box-shadow: 0 1px 3px rgba(0, 0, 0, .35); }
  .wide { width: 52px; left: 39px; } .round { width: 34px; left: 57px; }
  .calendar { background: #fff; display: flex; flex-direction: column; align-items: center; }
  .calendar b { width: 100%; height: 22px; background: #e2574b; color: #fff; font-size: 15px; line-height: 24px; text-align: center; font-weight: 600; }
  .calendar span { font-size: 44px; line-height: 45px; font-weight: 300; color: #222; letter-spacing: -2px; }
  .tv { background: linear-gradient(#2f3a36, #0d1213); display: flex; align-items: center; justify-content: center; gap: 2px; color: #fff; }
  .tv span { font-size: 32px; font-weight: 500; line-height: 28px; letter-spacing: -1px; }
  .quote { font-family: "Liberation Serif", serif; }
  .split { width: 2px; flex: none; height: 82px; margin-top: 12px; background: #364a58; }
  .first { margin-left: 19px; margin-right: 19px; }
  .second { margin-left: 20px; margin-right: 20px; }
</style>
